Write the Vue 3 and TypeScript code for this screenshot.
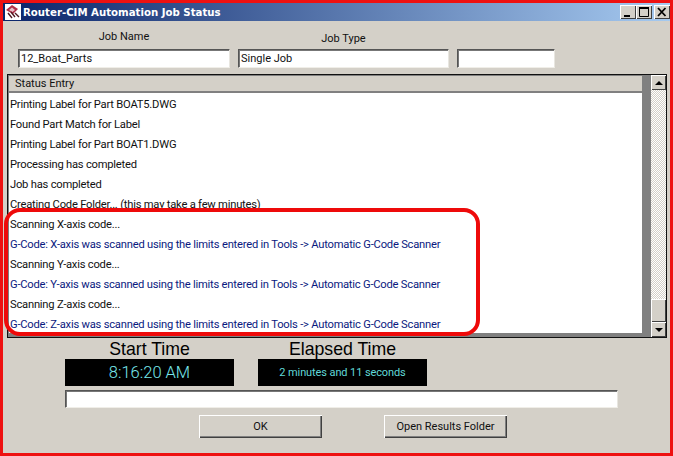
<script setup lang="ts">
interface Row { text: string; blue?: boolean }
const rows: Row[] = [
  { text: 'Printing Label for Part BOAT5.DWG' },
  { text: 'Found Part Match for Label' },
  { text: 'Printing Label for Part BOAT1.DWG' },
  { text: 'Processing has completed' },
  { text: 'Job has completed' },
  { text: 'Creating Code Folder... (this may take a few minutes)' },
  { text: 'Scanning X-axis code...' },
  { text: 'G-Code: X-axis was scanned using the limits entered in Tools -> Automatic G-Code Scanner', blue: true },
  { text: 'Scanning Y-axis code...' },
  { text: 'G-Code: Y-axis was scanned using the limits entered in Tools -> Automatic G-Code Scanner', blue: true },
  { text: 'Scanning Z-axis code...' },
  { text: 'G-Code: Z-axis was scanned using the limits entered in Tools -> Automatic G-Code Scanner', blue: true },
]
</script>

<template>
  <div class="window">
    <div class="titlebar">
      <svg class="appicon" width="16" height="16" viewBox="0 0 16 16">
        <rect x="0" y="0" width="16" height="16" fill="#fff" />
        <path d="M1 6 L7 1 L13 5 L8 10 Z" fill="#b03048" />
        <path d="M4 6 L7 3.5 L10 6 L7.5 8 Z" fill="#e8c0c8" />
        <path d="M3 9 L7 14 M6 8 L10 13 M10 9 L14 13" stroke="#501820" stroke-width="1.4" />
      </svg>
      <span class="title">Router-CIM Automation Job Status</span>
      <div class="caption">
        <span class="cbtn"><svg width="16" height="14" viewBox="0 0 16 14"><rect x="4" y="10" width="6" height="2" fill="#000" /></svg></span>
        <span class="cbtn"><svg width="16" height="14" viewBox="0 0 16 14"><path d="M3.5 2.5h9v9h-9z" fill="none" stroke="#000" /><rect x="3" y="2" width="10" height="2" fill="#000" /></svg></span>
        <span class="cbtn close"><svg width="16" height="14" viewBox="0 0 16 14"><path d="M4 3 L11.5 11 M11.5 3 L4 11" stroke="#000" stroke-width="1.8" /></svg></span>
      </div>
    </div>

    <div class="fields">
      <div class="field name">
        <label>Job Name</label>
        <div class="sunken">12_Boat_Parts</div>
      </div>
      <div class="field type">
        <label class="lower">Job Type</label>
        <div class="sunken">Single Job</div>
      </div>
      <div class="field extra">
        <div class="sunken"></div>
      </div>
    </div>

    <div class="listwrap">
      <div class="list">
        <div class="main">
          <div class="header">Status Entry</div>
          <div class="rows">
            <div v-for="(r, i) in rows" :key="i" class="row" :class="{ blue: r.blue }">{{ r.text }}</div>
          </div>
        </div>
        <div class="scrollbar">
          <span class="sbtn"><i class="up"></i></span>
          <div class="track"><span class="thumb"></span></div>
          <span class="sbtn"><i class="down"></i></span>
        </div>
      </div>
      <div class="highlight"></div>
    </div>

    <div class="times">
      <div class="timebox">
        <div class="tlabel">Start Time</div>
        <div class="display big">8:16:20 AM</div>
      </div>
      <div class="timebox">
        <div class="tlabel">Elapsed Time</div>
        <div class="display">2 minutes and 11 seconds</div>
      </div>
    </div>

    <div class="progress"></div>

    <div class="buttons">
      <button class="btn">OK</button>
      <button class="btn">Open Results Folder</button>
    </div>
  </div>
</template>

<style>
html, body { margin: 0; padding: 0; background: #d4d0c8; }
</style>

<style scoped>
.window {
  box-sizing: border-box;
  width: 673px;
  height: 456px;
  overflow: hidden;
  background: #d4d0c8;
  border: 3px solid #ee1111;
  font-family: Roboto, "Liberation Sans", sans-serif;
  font-size: 11px;
  color: #111;
}
.titlebar {
  height: 18px;
  display: flex;
  align-items: center;
  padding: 0 0 0 2px;
  background: linear-gradient(90deg, #0a246a 0%, #a6caf0 100%);
  color: #fff;
}
.appicon { flex: none; margin-right: 2px; }
.title { font-family: "DejaVu Sans", sans-serif; font-size: 10.2px; font-weight: 700; white-space: nowrap; }
.caption { margin-left: auto; display: flex; }
.cbtn {
  box-sizing: border-box;
  width: 16px;
  height: 14px;
  background: #d4d0c8;
  box-shadow: inset 1px 1px 0 #fff, inset -1px -1px 0 #404040;
  display: block;
}
.cbtn svg { display: block; }
.close { margin-left: 2px; }
.fields {
  height: 53px;
  display: flex;
  padding-left: 15px;
}
.field { display: flex; flex-direction: column; align-items: center; justify-content: flex-end; padding-bottom: 6px; box-sizing: border-box; }
.field label { line-height: 14px; margin-bottom: 5px; }
.field label.lower { margin-bottom: 3px; }
.name { width: 212px; margin-right: 8px; }
.type { width: 211px; margin-right: 8px; }
.extra { width: 98px; }
.sunken {
  box-sizing: border-box;
  width: 100%;
  height: 19px;
  line-height: 17px;
  background: #fff;
  padding: 0 2px;
  border: 1px solid;
  border-color: #555 #e8e6e0 #f0eee8 #555;
  box-shadow: inset 0 1px 0 #777, inset 1px 0 0 #777;
}
.listwrap { position: relative; margin: 0 3px 0 4px; height: 264px; }
.list {
  box-sizing: border-box;
  height: 264px;
  display: flex;
  border: 1px solid #111;
  background: #808080;
}
.main { flex: 1; display: flex; flex-direction: column; margin: 1px 9px 4px 1px; background: #fff; }
.header {
  box-sizing: border-box;
  flex: none;
  height: 17px;
  line-height: 15px;
  padding-left: 6px;
  background: #d4d0c8;
  border-bottom: 2px solid #808080;
}
.rows { flex: 1; overflow: hidden; padding: 2px 0 0 1px; }
.row { height: 20px; line-height: 20px; white-space: nowrap; font-size: 11.2px; letter-spacing: -0.22px; }
.blue { color: #0a1a80; }
.scrollbar { flex: none; width: 15px; display: flex; flex-direction: column; }
.sbtn {
  box-sizing: border-box;
  flex: none;
  height: 15px;
  background: #d4d0c8;
  box-shadow: inset 1px 1px 0 #fff, inset -1px -1px 0 #404040;
  display: flex;
  align-items: center;
  justify-content: center;
}
.up { border: 4px solid transparent; border-top: 0; border-bottom: 4px solid #000; }
.down { border: 4px solid transparent; border-bottom: 0; border-top: 4px solid #000; }
.track {
  flex: 1;
  display: flex;
  flex-direction: column;
  justify-content: flex-end;
  background: repeating-conic-gradient(#fff 0 25%, #d4d0c8 0 50%) 0 0 / 2px 2px;
}
.thumb {
  display: block;
  height: 23px;
  background: #d4d0c8;
  box-shadow: inset 1px 1px 0 #fff, inset -1px -1px 0 #404040;
}
.highlight {
  position: absolute;
  left: -3px;
  top: 134px;
  width: 476px;
  height: 128px;
  box-sizing: border-box;
  border: 4px solid #ee0a0a;
  border-radius: 16px;
}
.times { display: flex; margin-left: 62px; gap: 24px; margin-top: 1px; }
.timebox { width: 169px; }
.tlabel { font-family: "Liberation Sans", sans-serif; font-size: 17.7px; line-height: 20px; height: 20px; text-align: center; color: #000; }
.display {
  height: 27px;
  line-height: 27px;
  background: #000;
  color: #60d8d8;
  text-align: center;
  letter-spacing: -0.1px;
}
.big { font-size: 16.5px; font-weight: 300; letter-spacing: 0; color: #78e8ec; }
.progress {
  box-sizing: border-box;
  margin: 4px 0 0 62px;
  width: 553px;
  height: 18px;
  background: #fff;
  border: 1px solid;
  border-color: #555 #e8e6e0 #f0eee8 #555;
  box-shadow: inset 0 1px 0 #777, inset 1px 0 0 #777;
}
.buttons { display: flex; margin: 7px 0 0 196px; gap: 62px; }
.btn {
  box-sizing: border-box;
  width: 123px;
  height: 23px;
  padding: 0;
  font: inherit;
  color: #111;
  background: #d4d0c8;
  border: 0;
  box-shadow: inset 1px 1px 0 #fff, inset -1px -1px 0 #404040, inset -2px -2px 0 #808080;
}
</style>
